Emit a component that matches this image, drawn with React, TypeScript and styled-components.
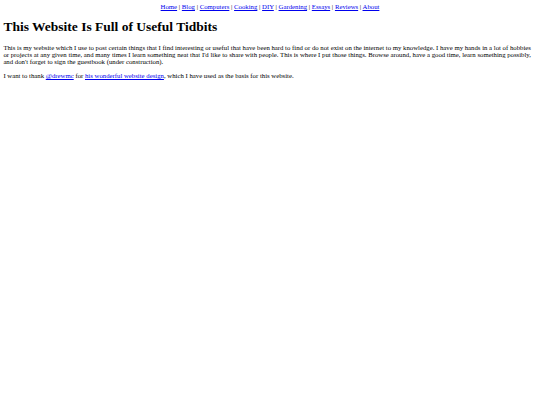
import styled, { createGlobalStyle } from "styled-components";

// the page is a 1280px wide layout photographed at 540px, so every size is scaled by this
const S = 540 / 1280;
const px = (n: number) => `${n * S}px`;

const GlobalStyle = createGlobalStyle`
  html, body {
    background: #ffffff;
  }
  body {
    margin: ${px(8)};
    font-family: "Liberation Serif", "Times New Roman", serif;
    font-size: ${px(16)};
    color: #000000;
  }
  a {
    color: #0000ee;
  }
`;

const Nav = styled.nav`
  display: block;
  text-align: center;
`;

const Title = styled.h1`
  font-size: ${px(32)};
  font-weight: bold;
  margin: ${px(21.44)} 0;
`;

const Paragraph = styled.p`
  margin: ${px(16)} 0;
`;

const links = [
  "Home",
  "Blog",
  "Computers",
  "Cooking",
  "DIY",
  "Gardening",
  "Essays",
  "Reviews",
  "About",
];

const App = () => {
  return (
    <>
      <GlobalStyle />
      <Nav>
        {links.map((l, i) => (
          <span key={l}>
            {i > 0 && " | "}
            <a href="#">{l}</a>
          </span>
        ))}
      </Nav>
      <Title>This Website Is Full of Useful Tidbits</Title>
      <Paragraph>
        This is my website which I use to post certain things that I find
        interesting or useful that have been hard to find or do not exist on
        the internet to my knowledge. I have my hands in a lot of hobbies or
        projects at any given time, and many times I learn something neat that
        I'd like to share with people. This is where I put those things. Browse
        around, have a good time, learn something possibly, and don't forget to
        sign the guestbook (under construction).
      </Paragraph>
      <Paragraph>
        I want to thank <a href="#">@drewmc</a> for{" "}
        <a href="#">his wonderful website design</a>, which I have used as the
        basis for this website.
      </Paragraph>
    </>
  );
};

export default App;
